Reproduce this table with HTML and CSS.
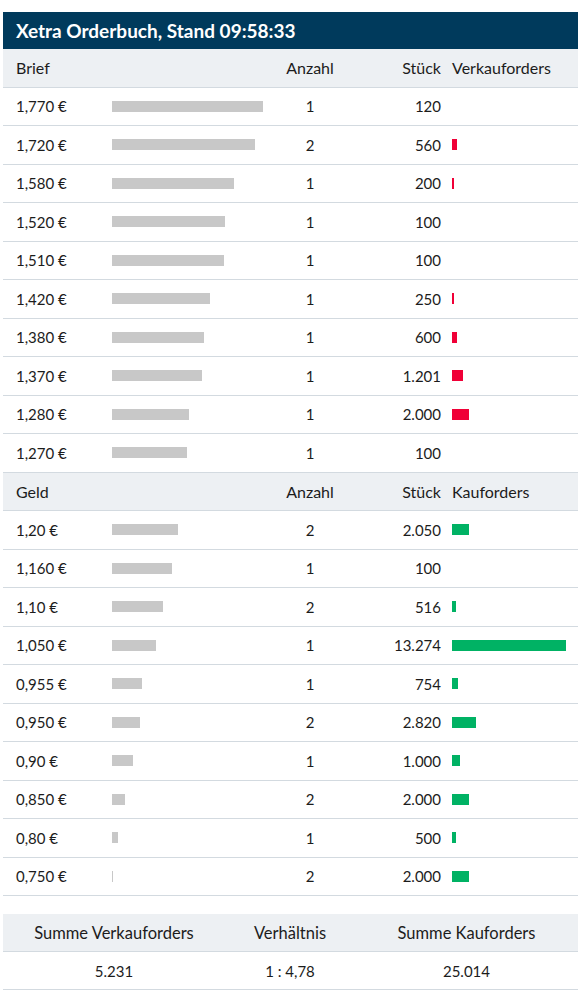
FILE: index.html
```html
<!DOCTYPE html>
<html lang="de">
<head>
<meta charset="utf-8">
<link rel="stylesheet" href="styles.css">
</head>
<body>
<div class="book">
  <div class="title">Xetra Orderbuch, Stand 09:58:33</div>

  <div class="row head">
    <div>Brief</div><div></div><div class="c">Anzahl</div><div class="r">Stück</div><div class="o">Verkauforders</div>
  </div>
  <div class="row"><div>1,770 €</div><div><span class="gbar" style="width:151px"></span></div><div class="c">1</div><div class="r">120</div><div class="o"></div></div>
  <div class="row"><div>1,720 €</div><div><span class="gbar" style="width:143px"></span></div><div class="c">2</div><div class="r">560</div><div class="o"><span class="rbar" style="width:5px"></span></div></div>
  <div class="row"><div>1,580 €</div><div><span class="gbar" style="width:122px"></span></div><div class="c">1</div><div class="r">200</div><div class="o"><span class="rbar" style="width:2px"></span></div></div>
  <div class="row"><div>1,520 €</div><div><span class="gbar" style="width:113px"></span></div><div class="c">1</div><div class="r">100</div><div class="o"></div></div>
  <div class="row"><div>1,510 €</div><div><span class="gbar" style="width:112px"></span></div><div class="c">1</div><div class="r">100</div><div class="o"></div></div>
  <div class="row"><div>1,420 €</div><div><span class="gbar" style="width:98px"></span></div><div class="c">1</div><div class="r">250</div><div class="o"><span class="rbar" style="width:2px"></span></div></div>
  <div class="row"><div>1,380 €</div><div><span class="gbar" style="width:92px"></span></div><div class="c">1</div><div class="r">600</div><div class="o"><span class="rbar" style="width:5px"></span></div></div>
  <div class="row"><div>1,370 €</div><div><span class="gbar" style="width:90px"></span></div><div class="c">1</div><div class="r">1.201</div><div class="o"><span class="rbar" style="width:11px"></span></div></div>
  <div class="row"><div>1,280 €</div><div><span class="gbar" style="width:77px"></span></div><div class="c">1</div><div class="r">2.000</div><div class="o"><span class="rbar" style="width:17px"></span></div></div>
  <div class="row"><div>1,270 €</div><div><span class="gbar" style="width:75px"></span></div><div class="c">1</div><div class="r">100</div><div class="o"></div></div>

  <div class="row head">
    <div>Geld</div><div></div><div class="c">Anzahl</div><div class="r">Stück</div><div class="o">Kauforders</div>
  </div>
  <div class="row"><div>1,20 €</div><div><span class="gbar" style="width:66px"></span></div><div class="c">2</div><div class="r">2.050</div><div class="o"><span class="bbar" style="width:17px"></span></div></div>
  <div class="row"><div>1,160 €</div><div><span class="gbar" style="width:60px"></span></div><div class="c">1</div><div class="r">100</div><div class="o"></div></div>
  <div class="row"><div>1,10 €</div><div><span class="gbar" style="width:51px"></span></div><div class="c">2</div><div class="r">516</div><div class="o"><span class="bbar" style="width:4px"></span></div></div>
  <div class="row"><div>1,050 €</div><div><span class="gbar" style="width:44px"></span></div><div class="c">1</div><div class="r">13.274</div><div class="o"><span class="bbar" style="width:114px"></span></div></div>
  <div class="row"><div>0,955 €</div><div><span class="gbar" style="width:30px"></span></div><div class="c">1</div><div class="r">754</div><div class="o"><span class="bbar" style="width:6px"></span></div></div>
  <div class="row"><div>0,950 €</div><div><span class="gbar" style="width:28px"></span></div><div class="c">2</div><div class="r">2.820</div><div class="o"><span class="bbar" style="width:24px"></span></div></div>
  <div class="row"><div>0,90 €</div><div><span class="gbar" style="width:21px"></span></div><div class="c">1</div><div class="r">1.000</div><div class="o"><span class="bbar" style="width:8px"></span></div></div>
  <div class="row"><div>0,850 €</div><div><span class="gbar" style="width:13px"></span></div><div class="c">2</div><div class="r">2.000</div><div class="o"><span class="bbar" style="width:17px"></span></div></div>
  <div class="row"><div>0,80 €</div><div><span class="gbar" style="width:6px"></span></div><div class="c">1</div><div class="r">500</div><div class="o"><span class="bbar" style="width:4px"></span></div></div>
  <div class="row"><div>0,750 €</div><div><span class="gbar" style="width:1px"></span></div><div class="c">2</div><div class="r">2.000</div><div class="o"><span class="bbar" style="width:17px"></span></div></div>

  <div class="sum head">
    <div>Summe Verkauforders</div><div>Verhältnis</div><div>Summe Kauforders</div>
  </div>
  <div class="sum">
    <div>5.231</div><div>1 : 4,78</div><div>25.014</div>
  </div>
</div>
</body>
</html>
```
FILE: styles.css
```css
* { box-sizing: border-box; }
body {
  margin: 12px 7px 0 3px;
  background: #fff;
  font-family: "Source Sans Pro", Lato, "Liberation Sans", sans-serif;
  font-size: 15px;
  color: #1c1c1c;
}
.book { width: 575px; }
.title {
  height: 37px;
  background: #003a5c;
  color: #fff;
  font-weight: 700;
  font-size: 19px;
  padding-left: 13px;
  display: flex;
  align-items: center;
}
.row {
  display: grid;
  grid-template-columns: 96px 155px 86px 88px 1fr;
  align-items: center;
  height: 38.5px;
  padding-left: 13px;
  border-bottom: 1px solid #d3dae0;
}
.head { background: #edf0f3; font-size: 16px; }
.c { text-align: center; }
.r { text-align: right; }
.o { padding-left: 11px; display: flex; align-items: center; }
.gbar, .rbar, .bbar { display: block; height: 11px; }
.gbar { background: #c8c8c8; }
.rbar { background: #f00037; }
.bbar { background: #00b264; }
.sum {
  display: grid;
  grid-template-columns: 222px 130px 1fr;
  height: 38px;
  align-items: center;
  text-align: center;
  border-bottom: 1px solid #d3dae0;
}
.sum.head { margin-top: 18px; font-size: 16.5px; }
```
